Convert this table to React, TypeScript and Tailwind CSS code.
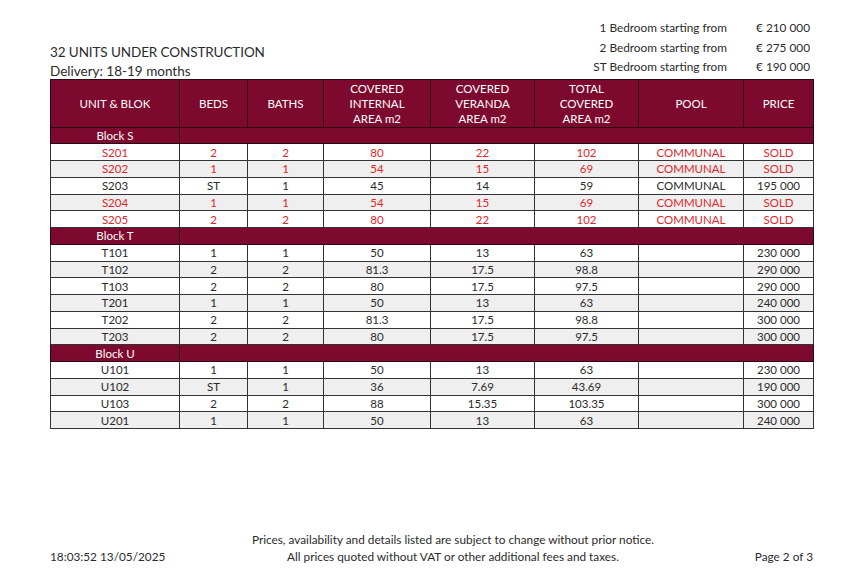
import React from 'react';

type Row = {
  unit: string;
  beds: string;
  baths: string;
  internal: string;
  veranda: string;
  total: string;
  pool: string;
  price: string;
  sold?: boolean;
};

const blocks: { name: string; rows: Row[] }[] = [
  {
    name: 'Block S',
    rows: [
      { unit: 'S201', beds: '2', baths: '2', internal: '80', veranda: '22', total: '102', pool: 'COMMUNAL', price: 'SOLD', sold: true },
      { unit: 'S202', beds: '1', baths: '1', internal: '54', veranda: '15', total: '69', pool: 'COMMUNAL', price: 'SOLD', sold: true },
      { unit: 'S203', beds: 'ST', baths: '1', internal: '45', veranda: '14', total: '59', pool: 'COMMUNAL', price: '195 000' },
      { unit: 'S204', beds: '1', baths: '1', internal: '54', veranda: '15', total: '69', pool: 'COMMUNAL', price: 'SOLD', sold: true },
      { unit: 'S205', beds: '2', baths: '2', internal: '80', veranda: '22', total: '102', pool: 'COMMUNAL', price: 'SOLD', sold: true },
    ],
  },
  {
    name: 'Block T',
    rows: [
      { unit: 'T101', beds: '1', baths: '1', internal: '50', veranda: '13', total: '63', pool: '', price: '230 000' },
      { unit: 'T102', beds: '2', baths: '2', internal: '81.3', veranda: '17.5', total: '98.8', pool: '', price: '290 000' },
      { unit: 'T103', beds: '2', baths: '2', internal: '80', veranda: '17.5', total: '97.5', pool: '', price: '290 000' },
      { unit: 'T201', beds: '1', baths: '1', internal: '50', veranda: '13', total: '63', pool: '', price: '240 000' },
      { unit: 'T202', beds: '2', baths: '2', internal: '81.3', veranda: '17.5', total: '98.8', pool: '', price: '300 000' },
      { unit: 'T203', beds: '2', baths: '2', internal: '80', veranda: '17.5', total: '97.5', pool: '', price: '300 000' },
    ],
  },
  {
    name: 'Block U',
    rows: [
      { unit: 'U101', beds: '1', baths: '1', internal: '50', veranda: '13', total: '63', pool: '', price: '230 000' },
      { unit: 'U102', beds: 'ST', baths: '1', internal: '36', veranda: '7.69', total: '43.69', pool: '', price: '190 000' },
      { unit: 'U103', beds: '2', baths: '2', internal: '88', veranda: '15.35', total: '103.35', pool: '', price: '300 000' },
      { unit: 'U201', beds: '1', baths: '1', internal: '50', veranda: '13', total: '63', pool: '', price: '240 000' },
    ],
  },
];

const startingPrices = [
  { label: '1 Bedroom starting from', price: '€ 210 000' },
  { label: '2 Bedroom starting from', price: '€ 275 000' },
  { label: 'ST Bedroom starting from', price: '€ 190 000' },
];

const colWidths = ['w-[129px]', 'w-[68px]', 'w-[76px]', 'w-[107px]', 'w-[104px]', 'w-[104px]', 'w-[105px]', 'w-[70px]'];

const headers = [
  ['UNIT & BLOK'],
  ['BEDS'],
  ['BATHS'],
  ['COVERED', 'INTERNAL', 'AREA m2'],
  ['COVERED', 'VERANDA', 'AREA m2'],
  ['TOTAL', 'COVERED', 'AREA m2'],
  ['POOL'],
  ['PRICE'],
];

export default function App() {
  return (
    <div className="w-[863px] h-[575px] bg-white text-[#2b2b2b] font-['Lato','Noto_Sans',sans-serif] relative">
      <div className="px-[50px] pt-[18px]">
        {/* Top: title + starting prices */}
        <div className="flex justify-between items-end">
          <div className="-mb-[2px]">
            <div className="text-[13.5px] leading-[19px] tracking-[-0.1px]">32 UNITS UNDER CONSTRUCTION</div>
            <div className="text-[13.5px] leading-[19px]">Delivery: 18-19 months</div>
          </div>
          <div className="grid grid-cols-[auto_83px] text-[11.8px] leading-[19.5px] mb-[2px] mr-[3px]">
            {startingPrices.map((p) => (
              <React.Fragment key={p.label}>
                <span className="text-right">{p.label}</span>
                <span className="text-right">{p.price}</span>
              </React.Fragment>
            ))}
          </div>
        </div>

        {/* Table */}
        <table className="border-collapse table-fixed w-[764px] text-[11.5px] text-center">
          <colgroup>
            {colWidths.map((w, i) => (
              <col key={i} className={w} />
            ))}
          </colgroup>
          <thead>
            <tr className="h-[48px] bg-[#7d0a2e] text-white">
              {headers.map((h, i) => (
                <th key={i} className="border border-[#2a0a12] font-normal leading-[15px] p-0">
                  {h.map((line) => (
                    <div key={line}>{line}</div>
                  ))}
                </th>
              ))}
            </tr>
          </thead>
          <tbody>
            {blocks.map((b) => (
              <React.Fragment key={b.name}>
                <tr className="h-[16.75px] bg-[#7d0a2e] text-white">
                  <td className="border border-[#2a0a12] p-0 leading-[15px]">{b.name}</td>
                  <td colSpan={7} className="border border-[#2a0a12] p-0"></td>
                </tr>
                {b.rows.map((r, i) => (
                  <tr
                    key={r.unit}
                    className={`h-[16.75px] ${i % 2 === 1 ? 'bg-[#efefef]' : 'bg-white'} ${r.sold ? 'text-[#e3262c]' : 'text-[#2b2b2b]'}`}
                  >
                    {[r.unit, r.beds, r.baths, r.internal, r.veranda, r.total, r.pool, r.price].map((v, j) => (
                      <td key={j} className="border border-[#333] p-0 leading-[15px]">
                        {v}
                      </td>
                    ))}
                  </tr>
                ))}
              </React.Fragment>
            ))}
          </tbody>
        </table>
      </div>

      {/* Footer */}
      <div className="absolute left-[50px] right-[50px] top-[532px] flex items-end justify-between text-[11.8px] leading-[16.5px]">
        <div className="w-[193px]">18:03:52 13/05/2025</div>
        <div className="text-center">
          <div>Prices, availability and details listed are subject to change without prior notice.</div>
          <div>All prices quoted without VAT or other additional fees and taxes.</div>
        </div>
        <div className="w-[150px] text-right">Page 2 of 3</div>
      </div>
    </div>
  );
}
